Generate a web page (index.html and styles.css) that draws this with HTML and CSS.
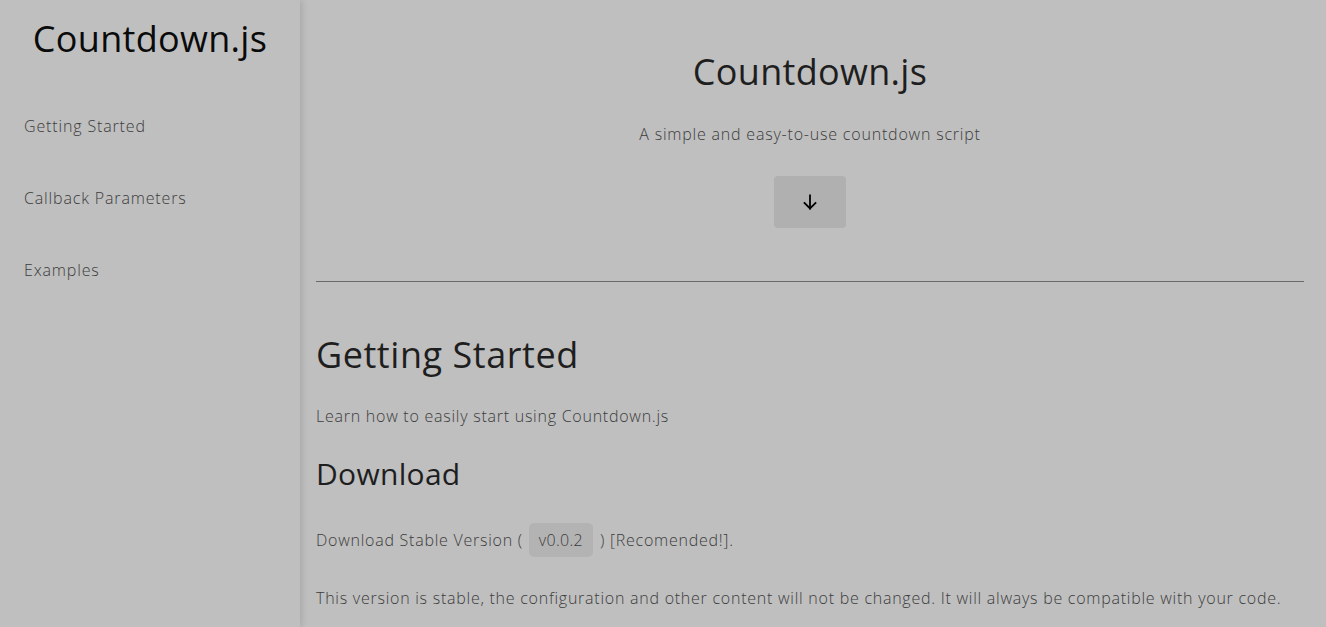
FILE: index.html
```html
<!DOCTYPE html>
<html lang="en">
<head>
<meta charset="utf-8">
<title>Countdown.js</title>
<link rel="stylesheet" href="styles.css">
</head>
<body>
<aside class="sidebar">
  <div class="brand">Countdown.js</div>
  <nav class="nav">
    <a class="nav-link" href="#getting-started">Getting Started</a>
    <a class="nav-link" href="#callback">Callback Parameters</a>
    <a class="nav-link" href="#examples">Examples</a>
  </nav>
</aside>
<main class="main">
  <header class="hero">
    <h1 class="hero-title">Countdown.js</h1>
    <p class="hero-sub">A simple and easy-to-use countdown script</p>
    <button class="hero-btn" type="button" aria-label="Scroll down">
      <svg width="16" height="16" viewBox="0 0 16 16" fill="none" stroke="#000" stroke-width="1.8" stroke-linecap="square">
        <path d="M8 1.5V14.5"/>
        <path d="M2.5 9L8 14.5L13.5 9"/>
      </svg>
    </button>
  </header>
  <hr class="divider">
  <section class="section" id="getting-started">
    <h2 class="section-title">Getting Started</h2>
    <p class="lead">Learn how to easily start using Countdown.js</p>
    <h3 class="sub-title">Download</h3>
    <p class="text dl">Download Stable Version ( <code class="badge">v0.0.2</code> ) [Recomended!].</p>
    <p class="text last">This version is stable, the configuration and other content will not be changed. It will always be compatible with your code.</p>
  </section>
</main>
</body>
</html>
```
FILE: styles.css
```css
* { box-sizing: border-box; }
html, body { height: 100%; }
body {
  margin: 0;
  background: #bfbfbf;
  font-family: "Open Sans", "DejaVu Sans", sans-serif;
  display: flex;
  overflow: hidden;
}
.sidebar {
  width: 300px;
  flex: 0 0 300px;
  height: 100vh;
  padding-top: 17px;
  box-shadow: 2px 0 6px rgba(0, 0, 0, 0.12);
  position: relative;
  z-index: 1;
}
.brand {
  font-size: 36px;
  line-height: 43px;
  font-weight: 400;
  color: #0a0a0a;
  text-align: center;
  letter-spacing: 0.3px;
}
.nav {
  margin-top: 30px;
  display: flex;
  flex-direction: column;
}
.nav-link {
  display: block;
  padding: 24px 24px;
  font-size: 16px;
  line-height: 24px;
  font-weight: 300;
  color: #3c3c3c;
  text-decoration: none;
  letter-spacing: 0.85px;
}
.main {
  flex: 1;
  padding: 50px 22px 0 16px;
  color: #3c3c3c;
}
.hero {
  display: flex;
  flex-direction: column;
  align-items: center;
}
.hero-title {
  margin: 0;
  font-size: 36px;
  line-height: 43px;
  font-weight: 400;
  color: #1e1e1e;
  letter-spacing: 0.3px;
}
.hero-sub {
  margin: 29px 0 0;
  font-size: 16px;
  line-height: 24px;
  font-weight: 300;
  letter-spacing: 0.8px;
}
.hero-btn {
  margin-top: 30px;
  width: 72px;
  height: 52px;
  border: 0;
  border-radius: 4px;
  background: #b0b0b0;
  display: flex;
  align-items: center;
  justify-content: center;
  padding: 0;
}
.divider {
  margin: 53px 0 0;
  border: 0;
  border-top: 1px solid #6a6a6a;
  height: 0;
}
.section { display: flex; flex-direction: column; }
.section-title {
  margin: 51px 0 0;
  font-size: 36px;
  line-height: 43px;
  font-weight: 400;
  color: #1e1e1e;
  letter-spacing: 0.55px;
}
.lead {
  margin: 28px 0 0;
  font-size: 16px;
  line-height: 24px;
  font-weight: 300;
  letter-spacing: 0.75px;
}
.sub-title {
  margin: 28px 0 0;
  font-size: 30px;
  line-height: 36px;
  font-weight: 400;
  color: #1e1e1e;
  letter-spacing: 0.3px;
}
.text {
  margin: 29px 0 0;
  font-size: 16px;
  line-height: 24px;
  font-weight: 300;
  letter-spacing: 0.75px;
}
.dl { margin-top: 31px; }
.badge {
  display: inline-block;
  font-family: inherit;
  font-size: 16px;
  line-height: 24px;
  padding: 5px 10px;
  margin: 0 2px 0 1px;
  background: #b3b3b3;
  border-radius: 5px;
  color: #3c3c3c;
  letter-spacing: 0.3px;
}
```
